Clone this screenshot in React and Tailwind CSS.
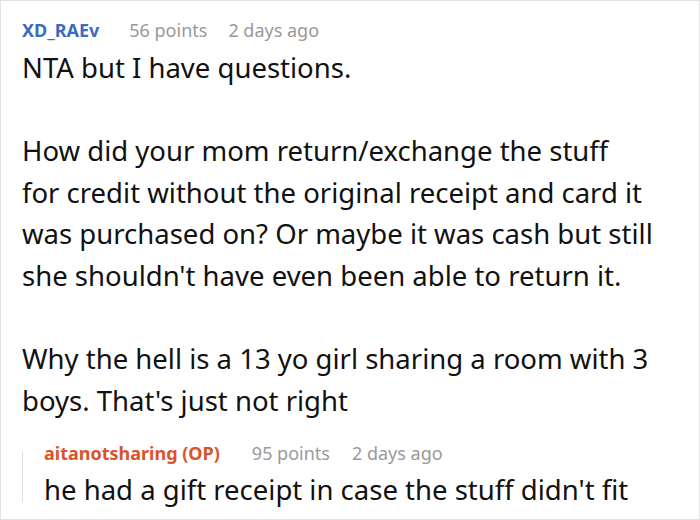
export default function App() {
  const font = { fontFamily: '"Noto Sans", "Open Sans", sans-serif' };
  return (
    <div className="w-[700px] h-[520px] bg-white border border-[#e2e2e2] overflow-hidden" style={font}>
      <div className="pl-[21px] pt-[17px]">
        <div className="flex items-center h-[24px] text-[18px] leading-[24px] whitespace-nowrap">
          <span className="font-bold text-[#3b6cc0]">XD_RAEv</span>
          <span className="ml-[30px] text-[#999999]">56 points</span>
          <span className="ml-[21px] text-[#999999]">2 days ago</span>
        </div>
        <div className="mt-[5px] text-[27.5px] leading-[41.6px] text-[#111111] whitespace-nowrap">
          <p>NTA but I have questions.</p>
          <p className="mt-[41.6px]">
            How did your mom return/exchange the stuff
            <br />
            for credit without the original receipt and card it
            <br />
            was purchased on? Or maybe it was cash but still
            <br />
            she shouldn't have even been able to return it.
          </p>
          <p className="mt-[41.6px]">
            Why the hell is a 13 yo girl sharing a room with 3
            <br />
            boys. That's just not right
          </p>
        </div>
        <div className="mt-[20px] flex">
          <div className="w-px h-[50px] mt-[11px] bg-[#dddddd]" />
          <div className="pl-[21px]">
            <div className="flex items-center h-[24px] text-[18px] leading-[24px] whitespace-nowrap">
              <span className="font-bold text-[#d9542a]">aitanotsharing (OP)</span>
              <span className="ml-[32px] text-[#999999]">95 points</span>
              <span className="ml-[22px] text-[#999999]">2 days ago</span>
            </div>
            <div className="mt-[3.5px] text-[27.5px] leading-[41.6px] text-[#111111] whitespace-nowrap">
              he had a gift receipt in case the stuff didn't fit
            </div>
          </div>
        </div>
      </div>
    </div>
  );
}
